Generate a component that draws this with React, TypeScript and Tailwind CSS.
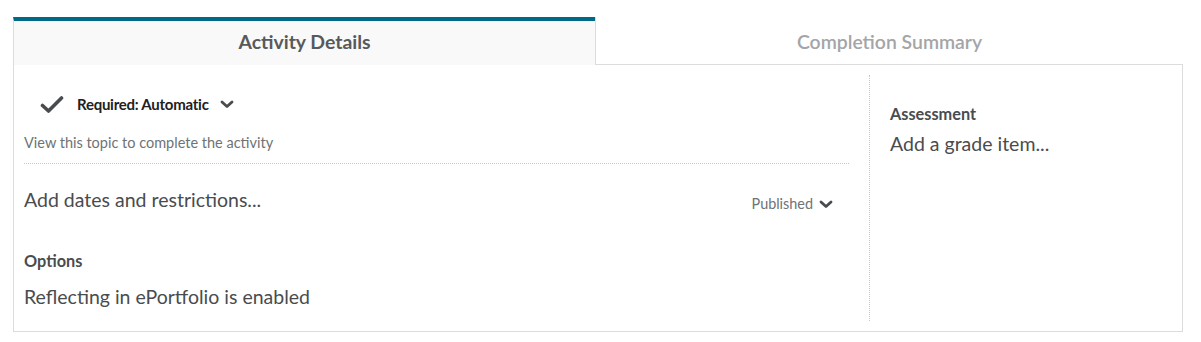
import React from "react";

function Check() {
  return (
    <svg width="24" height="19" viewBox="0 0 24 19" fill="none" className="shrink-0">
      <path d="M2.5 10.5 L8.5 16 L21.5 3" stroke="#494c4e" strokeWidth="3.6" strokeLinecap="round" strokeLinejoin="round" />
    </svg>
  );
}

function Chevron({ className = "" }: { className?: string }) {
  return (
    <svg width="14" height="9" viewBox="0 0 14 9" fill="none" className={className}>
      <path d="M2 2 L7 6.5 L12 2" stroke="#494c4e" strokeWidth="2.8" strokeLinecap="round" strokeLinejoin="round" />
    </svg>
  );
}

export default function App() {
  return (
    <div className="min-h-[342px] bg-white pl-[13px] pt-[17px] font-['Lato',sans-serif] text-[#494c4e]">
      <div className="w-[1170px]">
        {/* tabs */}
        <div className="flex h-[48px]">
          <div className="flex w-[582px] items-center justify-center border-l border-t-4 border-l-[#dcdcdc] border-t-[#006a86] bg-[#f9f9f9] pb-[2px] text-[19.4px] font-bold text-[#565a5c]">
            Activity Details
          </div>
          <div className="flex flex-1 items-center justify-center border-b border-l border-[#dcdcdc] pt-[3px] text-[19.4px] font-semibold text-[#a3a5a7]">
            Completion Summary
          </div>
        </div>

        {/* panel */}
        <div className="flex h-[267px] border-x border-b border-[#dcdcdc] py-[10px]">
          <div className="w-[856px] border-r border-dotted border-r-[#c6c9cc] pl-[10px] pr-[20px]">
            <div className="mt-[17px] flex h-[24px] items-center pl-[16px]">
              <Check />
              <span className="ml-[13px] text-[15px] font-bold tracking-[-0.25px] text-[#202122]">Required: Automatic</span>
              <Chevron className="ml-[11px] mt-[1px]" />
            </div>
            <div className="mt-[17px] flex h-[20px] items-center text-[14.5px] text-[#6e7376]">
              View this topic to complete the activity
            </div>
            <div className="mt-[10px] border-t border-dotted border-[#c6c9cc]" />
            <div className="mt-[22px] flex h-[27px] items-center justify-between">
              <span className="text-[19.5px]">Add dates and restrictions...</span>
              <span className="mr-[16px] mt-[9px] flex items-center text-[14.4px] text-[#6e7376]">
                Published
                <Chevron className="ml-[6px] mt-[1px]" />
              </span>
            </div>
            <div className="mt-[38px] flex h-[20px] items-center text-[16.3px] font-bold">Options</div>
            <div className="mt-[12px] flex h-[27px] items-center text-[19.5px]">
              Reflecting in ePortfolio is enabled
            </div>
          </div>
          <div className="flex-1 pl-[20px]">
            <div className="mt-[29px] flex h-[20px] items-center text-[16.3px] font-bold">Assessment</div>
            <div className="mt-[6px] flex h-[27px] items-center text-[19.5px]">Add a grade item...</div>
          </div>
        </div>
      </div>
    </div>
  );
}
